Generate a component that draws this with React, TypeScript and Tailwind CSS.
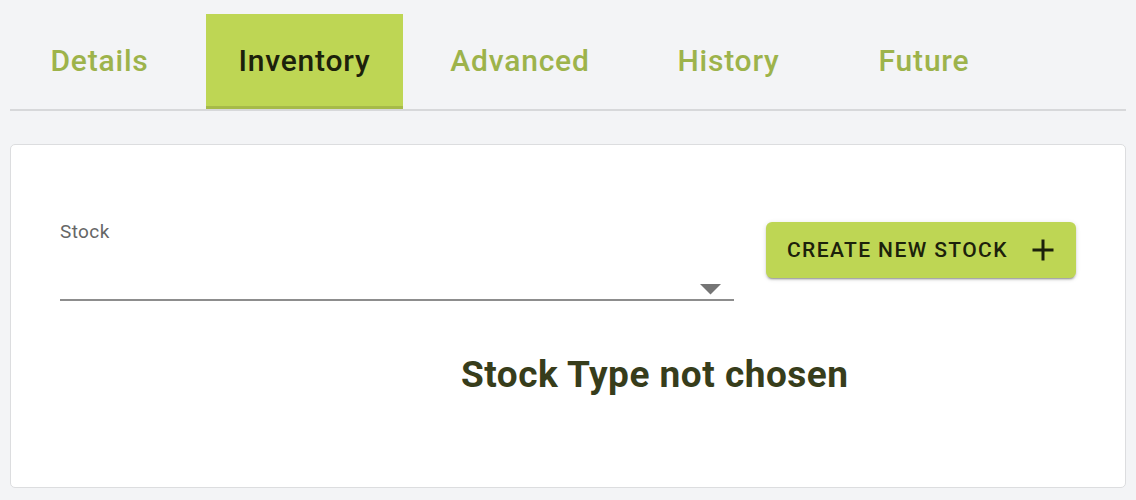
import React from "react";

const tabs = [
  { label: "Details", w: "w-[179px]", active: false },
  { label: "Inventory", w: "w-[197px]", active: true },
  { label: "Advanced", w: "w-[234px]", active: false },
  { label: "History", w: "w-[183px]", active: false },
  { label: "Future", w: "w-[208px]", active: false },
];

export default function App() {
  return (
    <div className="h-[500px] w-full bg-[#f3f4f6] px-[10px] pt-[14px] font-['Roboto',sans-serif]">
      <div className="flex border-b-2 border-[#d7d8da]">
        {tabs.map((t, i) => (
          <div
            key={t.label}
            className={
              (t.active
                ? "bg-[#bed654] text-[#1c210b] border-b-[3px] border-[#a6ba49] "
                : "text-[#9db34b] border-b-[3px] border-transparent ") +
              t.w +
              (i === 1 ? " ml-[17px]" : "") +
              " h-[95px] flex items-center justify-center text-[30px] font-medium tracking-[0.8px]"
            }
          >
            {t.label}
          </div>
        ))}
      </div>

      <div className="mt-[33px] rounded-[5px] border border-[#dcdddf] bg-white px-[49px] pt-[77px] pb-[94px]">
        <div className="flex items-start gap-[32px]">
          <div className="flex-1">
            <div className="text-[19px] leading-none tracking-[0.4px] text-[#666666]">Stock</div>
            <div className="relative h-[60px] border-b-2 border-[#8d8d8d]">
              <svg
                className="absolute right-[13px] top-[43px]"
                width="21"
                height="11"
                viewBox="0 0 21 11"
              >
                <path d="M0 0 L21 0 L10.5 10.5 Z" fill="#757575" />
              </svg>
            </div>
          </div>
          <button className="flex h-[56px] w-[310px] items-center rounded-[6px] bg-[#bed654] pl-[21px] pr-[15px] text-[21px] font-medium uppercase tracking-[1.4px] text-[#1c210b] shadow-[0_3px_1px_-2px_rgba(0,0,0,0.2),0_2px_2px_0_rgba(0,0,0,0.14),0_1px_5px_0_rgba(0,0,0,0.12)]">
            <span className="leading-none">Create new stock</span>
            <svg className="ml-auto" width="36" height="36" viewBox="0 0 24 24">
              <path d="M19 13h-6v6h-2v-6H5v-2h6V5h2v6h6v2z" fill="#1c210b" />
            </svg>
          </button>
        </div>
        <div className="mt-[55px] pl-[401px] text-[37px] font-bold leading-none tracking-[0.5px] text-[#373d1b]">
          Stock Type not chosen
        </div>
      </div>
    </div>
  );
}
